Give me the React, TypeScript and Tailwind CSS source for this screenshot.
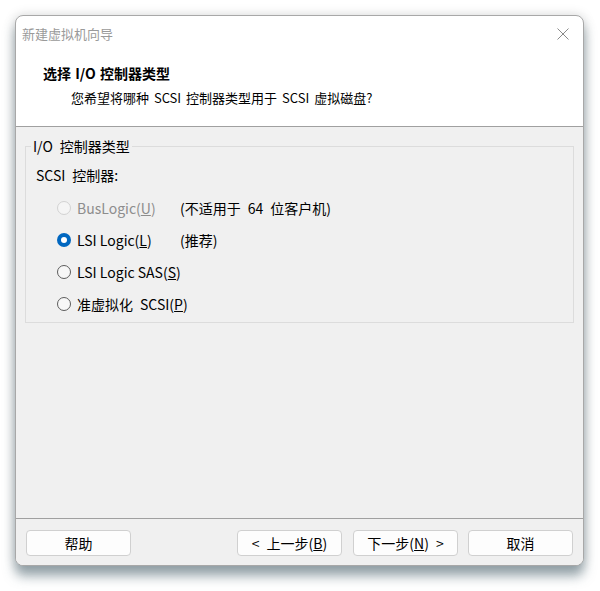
import React, { useState } from 'react';

type Option = {
  id: string;
  label: string;
  key: string;
  note?: string;
  disabled?: boolean;
};

const options: Option[] = [
  { id: 'buslogic', label: 'BusLogic(', key: 'U', note: '(不适用于\u200264\u2002位客户机)', disabled: true },
  { id: 'lsi', label: 'LSI Logic(', key: 'L', note: '(推荐)' },
  { id: 'sas', label: 'LSI Logic SAS(', key: 'S' },
  { id: 'pvscsi', label: '准虚拟化\u2002SCSI(', key: 'P' },
];

const Radio = ({ checked, disabled }: { checked: boolean; disabled?: boolean }) => {
  if (checked) {
    return (
      <span className="w-[14px] h-[14px] rounded-full bg-[#0067c0] flex items-center justify-center shrink-0">
        <span className="w-[6px] h-[6px] rounded-full bg-white" />
      </span>
    );
  }
  return (
    <span
      className={
        disabled
          ? 'w-[14px] h-[14px] rounded-full border border-[#d2d2d2] bg-[#f5f5f5] shrink-0'
          : 'w-[14px] h-[14px] rounded-full border border-[#5c5c5c] bg-[#f7f7f7] shrink-0'
      }
    />
  );
};

const Button = ({ children }: { children: React.ReactNode }) => (
  <button className="w-[105px] h-[26px] rounded-[4px] border border-[#d0d0d0] bg-[#fdfdfd] text-[14px] text-black flex items-center justify-center whitespace-pre">
    {children}
  </button>
);

export default function App() {
  const [selected, setSelected] = useState('lsi');

  return (
    <div className="w-[600px] h-[591px] bg-white pt-[15px] pl-[15px] font-['Noto_Sans_CJK_SC',sans-serif] text-[14px] text-black">
      <div className="w-[569px] h-[551px] flex flex-col rounded-[8px] border border-[#a8a8a8] overflow-hidden bg-white shadow-[0_10px_12px_0_rgba(70,95,105,0.55),0_0_12px_rgba(0,0,0,0.15)]">
        {/* title bar */}
        <div className="h-[36px] flex items-center justify-between pl-[6px] pr-[14px] shrink-0">
          <span className="text-[13px] text-[#9a9a9a]">新建虚拟机向导</span>
          <svg width="12" height="12" viewBox="0 0 12 12" className="text-[#8a8a8a]">
            <path d="M0.5 0.5 L11.5 11.5 M11.5 0.5 L0.5 11.5" stroke="currentColor" strokeWidth="1" fill="none" />
          </svg>
        </div>

        {/* header */}
        <div className="h-[74px] pl-[27px] pt-[11px] shrink-0">
          <div className="leading-[20px] font-bold text-[14px] [word-spacing:1px]">选择 I/O 控制器类型</div>
          <div className="leading-[20px] mt-[5px] pl-[28px] text-[13px] [word-spacing:2px]">您希望将哪种 SCSI 控制器类型用于 SCSI 虚拟磁盘?</div>
        </div>
        <div className="h-px bg-[#a0a0a0] shrink-0" />

        {/* body */}
        <div className="flex-1 bg-[#f0f0f0] pt-[9px] px-[9px]">
          <fieldset className="border border-[#dcdcdc] m-0 p-0 pb-[2px]">
            <legend className="ml-[5px] px-[2px] leading-[20px]">I/O{'\u2002'}控制器类型</legend>
            <div className="pl-[10px]">
              <div className="leading-[20px] mt-[9px]">SCSI{'\u2002'}控制器:</div>
              <div className="mt-[7px] flex flex-col">
                {options.map(o => (
                  <div
                    key={o.id}
                    className="h-[32px] flex items-center"
                    onClick={() => !o.disabled && setSelected(o.id)}
                  >
                    <div className="ml-[21px] w-[123px] flex items-center gap-[6px]">
                      <Radio checked={selected === o.id} disabled={o.disabled} />
                      <span className={o.disabled ? 'text-[#8d8d8d] whitespace-nowrap' : 'whitespace-nowrap'}>
                        {o.label}
                        <u>{o.key}</u>)
                      </span>
                    </div>
                    {o.note && <span className="whitespace-nowrap">{o.note}</span>}
                  </div>
                ))}
              </div>
            </div>
          </fieldset>
        </div>
        <div className="h-px bg-[#a0a0a0] shrink-0" />

        {/* footer */}
        <div className="h-[46px] bg-[#f0f0f0] flex items-start pt-[11px] pl-[10px] pr-[10px] shrink-0">
          <Button>帮助</Button>
          <div className="flex-1" />
          <Button>
            &lt;{'\u2002'}上一步(<u>B</u>)
          </Button>
          <div className="w-[11px]" />
          <Button>
            下一步(<u>N</u>){'\u2002'}&gt;
          </Button>
          <div className="w-[10px]" />
          <Button>取消</Button>
        </div>
      </div>
    </div>
  );
}
